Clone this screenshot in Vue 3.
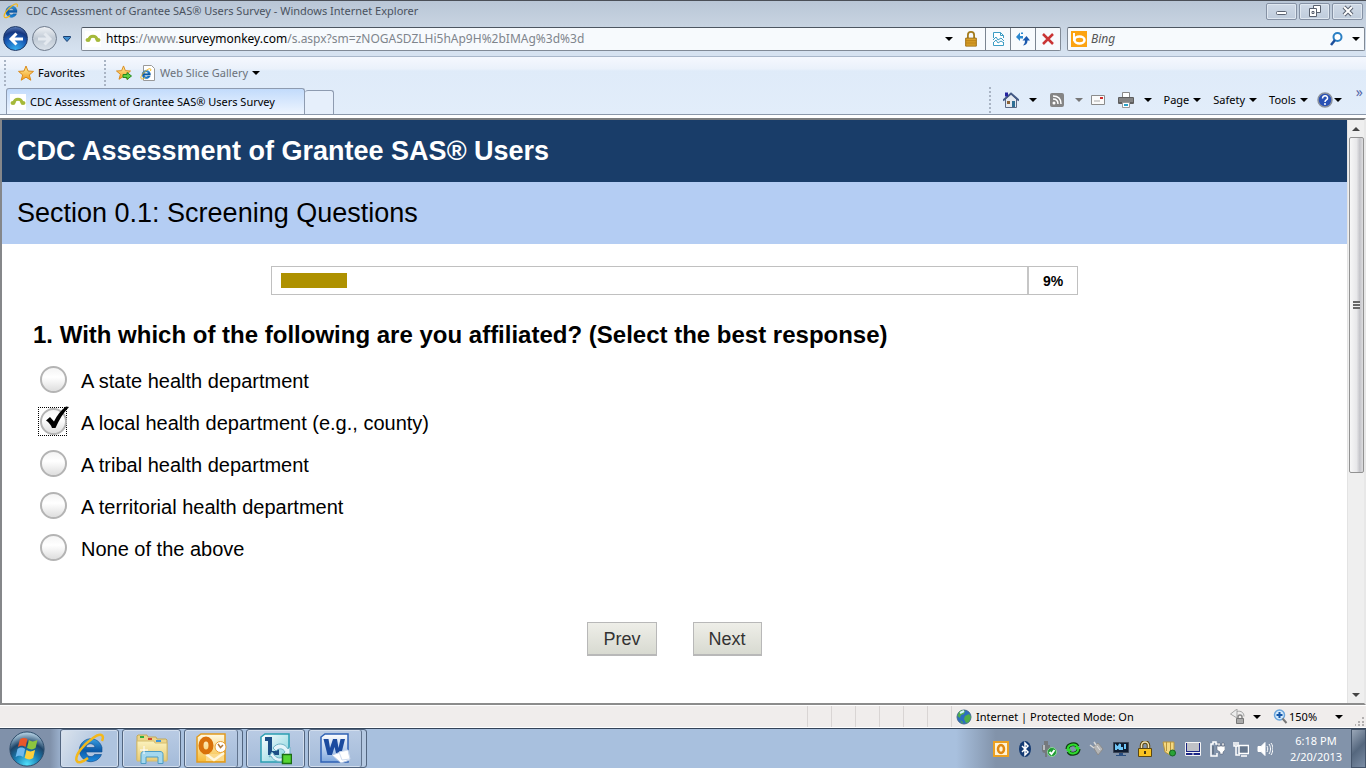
<template>
  <div class="desktop">
    <svg class="sprites" aria-hidden="true">
      <defs>
        <linearGradient id="blue" x1="0" y1="0" x2="0" y2="1">
          <stop offset="0" stop-color="#3a9fe0" />
          <stop offset="0.5" stop-color="#0c5aa8" />
          <stop offset="1" stop-color="#1c8ade" />
        </linearGradient>
        <linearGradient id="gold" x1="0" y1="0" x2="0" y2="1">
          <stop offset="0" stop-color="#fff0a0" />
          <stop offset="1" stop-color="#f29a1a" />
        </linearGradient>
        <linearGradient id="folder" x1="0" y1="0" x2="0" y2="1">
          <stop offset="0" stop-color="#fbf2bd" />
          <stop offset="1" stop-color="#e9cb74" />
        </linearGradient>
        <linearGradient id="orange" x1="0" y1="0" x2="0" y2="1">
          <stop offset="0" stop-color="#fffbe6" />
          <stop offset="1" stop-color="#f7bb36" />
        </linearGradient>
        <linearGradient id="teal" x1="0" y1="0" x2="1" y2="1">
          <stop offset="0" stop-color="#ffffff" />
          <stop offset="1" stop-color="#7cd0dc" />
        </linearGradient>
        <linearGradient id="paper" x1="0" y1="0" x2="0" y2="1">
          <stop offset="0" stop-color="#ffffff" />
          <stop offset="1" stop-color="#7fa8de" />
        </linearGradient>
        <radialGradient id="ball" cx="50%" cy="95%" r="90%">
          <stop offset="0" stop-color="#4fe0fb" />
          <stop offset="0.4" stop-color="#1a7fb4" />
          <stop offset="0.7" stop-color="#1d4468" />
          <stop offset="1" stop-color="#a9c6da" />
        </radialGradient>
      </defs>
      <symbol id="ie" viewBox="0 0 32 32">
        <path d="M27.500 21.500A11.500 11.500 0 1 1 28 14.500V19H12c.5 5 6.500 6 8.500 2.500zM12 14.500h9c-.5-5-8.500-5-9 0z" fill="url(#blue)" stroke="#0b4a8c" stroke-width=".6" />
        <path d="M28 8C31 1 26 0 19 5C9 12 1 22 2.500 27.500C4 31 9 29 14 25" fill="none" stroke="#f3b81c" stroke-width="2.500" />
      </symbol>
      <symbol id="monkey" viewBox="0 0 16 16">
        <rect width="16" height="16" fill="#fff" />
        <path d="M4 9C4 4 12 4 12 9" fill="none" stroke="#a5b93a" stroke-width="3" />
        <ellipse cx="3" cy="9" rx="2.500" ry="2" fill="#a5b93a" />
        <ellipse cx="13" cy="9" rx="2.500" ry="2" fill="#a5b93a" />
      </symbol>
      <symbol id="star" viewBox="0 0 16 16">
        <path d="M8 1l2 5 5.500.4-4.200 3.500 1.500 5.300L8 12.200l-4.800 3 1.500-5.300L.5 6.400 6 6z" fill="url(#gold)" stroke="#d98a1c" />
      </symbol>
      <symbol id="down" viewBox="0 0 8 8">
        <path d="M0 2h8L4 6z" fill="currentColor" />
      </symbol>
    </svg>

    <header class="chrome">
      <div class="titlebar">
        <svg class="icon"><use href="#ie" /></svg>
        <span class="title">CDC Assessment of Grantee SAS® Users Survey - Windows Internet Explorer</span>
        <div class="window-buttons">
          <button type="button" aria-label="Minimize">
            <svg viewBox="0 0 14 12"><rect x="1.500" y="6.500" width="10" height="3" rx="1" fill="#fff" stroke="#5a6270" /></svg>
          </button>
          <button type="button" aria-label="Restore">
            <svg viewBox="0 0 14 12" fill="#fff" stroke="#5a6270"><path d="M5.500.5h7v7h-7z" /><path d="M1.500 3.500h7v8h-7z" /><path d="M4 6.500h2v2H4z" /></svg>
          </button>
          <button type="button" aria-label="Close">
            <svg viewBox="0 0 14 12"><path d="M3 2l8 8M11 2l-8 8" stroke="#5a6270" stroke-width="4" /><path d="M3 2l8 8M11 2l-8 8" stroke="#fff" stroke-width="2" /></svg>
          </button>
        </div>
      </div>

      <div class="navrow">
        <div class="history">
          <button type="button" class="round back" aria-label="Back">
            <svg viewBox="0 0 16 16"><path d="M8.500 2.500L3 8l5.500 5.500M3.500 8H15" fill="none" stroke="#fff" stroke-width="3" /></svg>
          </button>
          <button type="button" class="round forward" aria-label="Forward">
            <svg viewBox="0 0 16 16"><path d="M7.500 2.500L13 8l-5.500 5.500M12.500 8H1" fill="none" stroke="#e4e9ef" stroke-width="3" /></svg>
          </button>
          <button type="button" class="bare recent" aria-label="Recent pages"><svg class="arrow" viewBox="0 0 8 8"><path d="M.5 1.500h7v1L4 6.500.5 2.500z" fill="#3f8fd0" stroke="#1b3f70" /></svg></button>
        </div>
        <div class="address">
          <svg class="icon"><use href="#monkey" /></svg>
          <a class="url" href="#"><b>https</b>://www.<b>surveymonkey.com</b>/s.aspx?sm=zNOGASDZLHi5hAp9H%2bIMAg%3d%3d</a>
          <button type="button" class="bare" aria-label="Show addresses"><svg class="arrow"><use href="#down" /></svg></button>
          <svg class="icon lock" viewBox="0 0 16 18"><path d="M4.500 8V4.500a3.500 3.500 0 0 1 7 0V8" fill="none" stroke="#a37b1d" stroke-width="2" /><path d="M2 8h12v9H2z" fill="#e2a92f" stroke="#96670b" /><path d="M2 10.500h12M2 12.500h12M2 14.500h12" stroke="#b57c12" /></svg>
          <button type="button" class="cell" aria-label="Compatibility view">
            <svg class="icon" viewBox="0 0 16 16"><path d="M3.500 7V1.500h7l3 3V7M3.500 11v3.500h10V11" fill="#fff" stroke="#3c9cc4" /><path d="M10.500 1.500v3h3M3 9l3-3 2 3 3-2 3 3M3 12l3-3 2 3 3-2 3 2" fill="none" stroke="#3c9cc4" /></svg>
          </button>
          <button type="button" class="cell" aria-label="Refresh">
            <svg class="icon" viewBox="0 0 16 16"><path d="M1 6l4-4.500V5h3v2.500H5V10zM6 1.500h2V3H6z" fill="#2a87cf" /><path d="M15 9.500h-2.500c0 3-1.500 4.500-4.500 5 1.500-1.500 2-3 2-5H7.500L11.500 5z" fill="#1a58ad" /></svg>
          </button>
          <button type="button" class="cell" aria-label="Stop">
            <svg class="icon" viewBox="0 0 16 16"><path d="M3 3l10 10M13 3L3 13" stroke="#c93434" stroke-width="2.500" /></svg>
          </button>
        </div>
        <div class="search">
          <svg class="icon" viewBox="0 0 16 16"><rect width="16" height="16" fill="#fca311" /><path d="M3 2v8" stroke="#fff" stroke-width="2" /><ellipse cx="8.500" cy="9" rx="5" ry="3.500" fill="none" stroke="#fff" stroke-width="2.500" /></svg>
          <input type="text" aria-label="Search" placeholder="Bing" />
          <button type="button" class="bare" aria-label="Search the web">
            <svg class="icon" viewBox="0 0 16 16"><circle cx="9.500" cy="6" r="4" fill="#fff" stroke="#2a7fc4" stroke-width="2" /><path d="M7 9l-4 5" stroke="#1c4f9c" stroke-width="2.500" /></svg>
          </button>
          <button type="button" class="bare" aria-label="Search options"><svg class="arrow"><use href="#down" /></svg></button>
        </div>
      </div>

      <div class="toolbars">
        <div class="favorites">
          <i class="grip"></i>
          <button type="button" class="bare"><svg class="icon"><use href="#star" /></svg>Favorites</button>
          <i class="grip"></i>
          <button type="button" class="bare" aria-label="Add to favorites bar">
            <svg class="icon" viewBox="0 0 16 16"><use href="#star" width="15" height="15" /><path d="M7 9.500h4V7.500l4.500 3.500-4.500 3.500v-2H7z" fill="#5fd044" stroke="#26891d" /></svg>
          </button>
          <button type="button" class="bare gallery">
            <svg class="icon" viewBox="0 0 16 16"><path d="M3.500.5h8l3 3v12h-11z" fill="#fff" stroke="#999" /><use href="#ie" y="3" width="12" height="12" /></svg>
            Web Slice Gallery
            <svg class="arrow"><use href="#down" /></svg>
          </button>
        </div>

        <div class="tabrow">
          <div class="tabs">
            <button type="button" class="tab"><svg class="icon"><use href="#monkey" /></svg>CDC Assessment of Grantee SAS® Users Survey</button>
            <button type="button" class="tab new" aria-label="New tab"></button>
          </div>
          <div class="commands">
            <i class="grip"></i>
            <button type="button" class="bare wide" aria-label="Home">
              <svg class="icon" viewBox="0 0 16 16"><path d="M2.500 7v8.500h11V7L8 2z" fill="#e4e9f0" stroke="#5b6a86" /><path d="M0 8.500l8-7 8 7" fill="none" stroke="#445a85" stroke-width="2" /><path d="M2 .5h3v4H2z" fill="#2424a0" /><path d="M9 9h3v6H9z" fill="#2f6f96" /><path d="M4 9h3v3H4z" fill="#8a6236" /></svg>
              <svg class="arrow"><use href="#down" /></svg>
            </button>
            <button type="button" class="bare wide feeds" aria-label="Feeds">
              <svg class="icon" viewBox="0 0 16 16"><rect x="1" y="1" width="14" height="14" rx="2" fill="#858585" /><path d="M4 7c3 0 5 2 5 5M4 4c5 0 8 3 8 8" fill="none" stroke="#fff" stroke-width="1.500" /><circle cx="5" cy="11" r="1.500" fill="#fff" /></svg>
              <svg class="arrow"><use href="#down" /></svg>
            </button>
            <button type="button" class="bare" aria-label="Read mail">
              <svg class="icon" viewBox="0 0 16 16"><path d="M1.500 3.500h13v9h-13z" fill="#fafafa" stroke="#8b8b8b" /><path d="M10 5h3v2h-3z" fill="#d22c2c" /><path d="M4 9h6" stroke="#aaa" /></svg>
            </button>
            <button type="button" class="bare wide" aria-label="Print">
              <svg class="icon" viewBox="0 0 16 16"><path d="M4.500.5h7V6h-7z" fill="#fff" stroke="#888" /><rect y="5" width="16" height="7" rx="1" fill="#5e5e5e" /><path d="M1 7h14M1 9h14" stroke="#a9a9a9" /><path d="M4.500 10.500h7v5h-7z" fill="#fff" stroke="#999" /><path d="M6 13h4" stroke="#28a0c8" stroke-width="2" /></svg>
              <svg class="arrow"><use href="#down" /></svg>
            </button>
            <button v-for="name in menus" :key="name" type="button" class="bare menu">
              {{ name }}<svg class="arrow"><use href="#down" /></svg>
            </button>
            <button type="button" class="bare help" aria-label="Help">
              <svg class="icon" viewBox="0 0 16 16"><circle cx="8" cy="8" r="7" fill="#2a52b5" stroke="#8c929d" stroke-width="1.500" /><path d="M5.500 6.500c0-4 5.500-3.500 5 0C10.200 8 8 8 8 10" fill="none" stroke="#fff" stroke-width="1.500" /><circle cx="8" cy="12" r="1" fill="#fff" /></svg>
              <svg class="arrow"><use href="#down" /></svg>
            </button>
            <button type="button" class="bare more" aria-label="More tools">»</button>
          </div>
        </div>
      </div>
    </header>

    <div class="viewport">
      <main class="page">
        <h1>CDC Assessment of Grantee SAS® Users</h1>
        <h2>Section 0.1: Screening Questions</h2>

        <div class="progress">
          <div class="track"><div class="bar" :style="{ width: progress + '%' }"></div></div>
          <div class="percent">{{ progress }}%</div>
        </div>

        <form @submit.prevent>
          <fieldset>
            <legend>1. With which of the following are you affiliated? (Select the best response)</legend>
            <label v-for="(option, i) in options" :key="option" :for="'opt' + i" class="option">
              <span class="mark" :class="{ focused: selected === i }">
                <input :id="'opt' + i" v-model="selected" type="radio" name="affiliation" :value="i" />
                <svg v-if="selected === i" class="tick" viewBox="0 0 24 24"><path d="M1 14.500l4-3.500 4 4.500C12 9 16 4 21 .5L24 1C18 7 14 14 10.500 22H7C6 19 4 16.500 1 14.500z" fill="#000" /></svg>
              </span>
              {{ option }}
            </label>
          </fieldset>
          <div class="actions">
            <button type="button">Prev</button>
            <button type="submit">Next</button>
          </div>
        </form>
      </main>
      <div class="scrollbar">
        <svg class="arrow up"><use href="#down" /></svg>
        <div class="rail"><div class="thumb"><i></i></div></div>
        <svg class="arrow"><use href="#down" /></svg>
      </div>
    </div>

    <footer class="status">
      <i v-for="n in 6" :key="n" class="pane"></i>
      <div class="zone">
        <svg class="icon" viewBox="0 0 16 16"><circle cx="8" cy="8" r="7" fill="#2b6fc0" stroke="#476b8d" /><path d="M3 3c2-2 5-2 6-1L8 5 5 6 4 9 1.500 7zM9 7l4-2 2 3-2 5-3 1-2-4zM4 11l3 2-1 1.500z" fill="#4fae48" /><path d="M4 4l4-2" stroke="#d5f2ff" stroke-width="2" /></svg>
        Internet | Protected Mode: On
      </div>
      <div class="privacy">
        <svg class="icon" viewBox="0 0 16 16"><path d="M7 2.500c4-1 7 1 7 5M7 0v9L.5 5z" fill="#ececec" stroke="#a5a5a5" /><path d="M8 10V8a2 2 0 0 1 4 0v2" fill="none" stroke="#888" stroke-width="1.500" /><path d="M6.500 9.500h7v5h-7z" fill="#aaa" stroke="#777" /></svg>
        <svg class="arrow"><use href="#down" /></svg>
      </div>
      <div class="zoom">
        <svg class="icon" viewBox="0 0 16 16"><circle cx="6.500" cy="6" r="5" fill="#d5ebfc" stroke="#6aa5dc" stroke-width="1.500" /><path d="M6.500 3v6M3.500 6h6" stroke="#1457a8" stroke-width="2" /><path d="M9.500 9.500l4 4.500" stroke="#777" stroke-width="2" /></svg>
        <span>150%</span>
        <svg class="arrow"><use href="#down" /></svg>
      </div>
      <svg class="resize" viewBox="0 0 9 9" fill="#b3b0b0"><path d="M7 0h2v2H7zM7 4h2v2H7zM3 4h2v2H3zM7 7h2v2H7zM3 7h2v2H3zM0 7h1v2H0z" /></svg>
    </footer>

    <nav class="taskbar">
      <button type="button" class="start" aria-label="Start">
        <svg viewBox="0 0 40 40">
          <circle cx="20" cy="20" r="18" fill="url(#ball)" stroke="#2a4a68" />
          <path d="M12.500 10c3-2 5-2 8-.5l-2 8.500c-3-2-5-2-8 0z" fill="#e9572b" />
          <path d="M22 10.500c3 2 5 2 9 0l-2 8.500c-3 2-5 2-9 0z" fill="#8cc63f" />
          <path d="M10 20c3-2 5-2 8 0l-2 8.500c-3-2-5-2-8 0z" fill="#6fb9ee" />
          <path d="M19.500 21c3 2 5 2 9 0l-2 8.500c-3 2-5 2-9 0z" fill="#fdd03c" />
        </svg>
      </button>
      <button type="button" class="task active" aria-label="Internet Explorer"><svg viewBox="0 0 32 32"><use href="#ie" /></svg></button>
      <button type="button" class="task" aria-label="Windows Explorer">
        <svg viewBox="0 0 32 32"><path d="M1 6V3l1-1h9l1 2h8l1 2h9l1 1v20H1z" fill="#ecd68b" stroke="#c2a85a" /><path d="M4 3h4v2H4z" fill="#2fae3e" /><path d="M12 5h4v2h-4z" fill="#d3452f" /><path d="M20 7h5v2h-5z" fill="#3d95d8" /><path d="M1 8h17l1 2h12v18H1z" fill="url(#folder)" stroke="#d6bd6d" /><path d="M5 30.500v-9c0-2 1-3 3-3h16c2 0 3 1 3 3v9h-5V24H10v6.500z" fill="#a4d8ee" stroke="#4d9cc4" /><path d="M8 13v8M4 17h8" stroke="#fff" /></svg>
      </button>
      <button type="button" class="task stacked" aria-label="Outlook">
        <svg viewBox="0 0 32 32"><path d="M2 4l4-3h24v28H2z" fill="url(#orange)" stroke="#e29a1e" stroke-width="1.500" /><path d="M11 21h18v7H11z" fill="#fbd98a" /><path d="M11 21l8 6 10-7" fill="none" stroke="#fff7df" stroke-width="2.500" /><ellipse cx="11" cy="12.500" rx="5" ry="6.500" fill="none" stroke="#d9710a" stroke-width="5" /><circle cx="25.500" cy="14" r="5.500" fill="#fff" stroke="#e8a033" /><path d="M23 11l2.500 3.500L28 12" fill="none" stroke="#b1783a" stroke-width="1.500" /></svg>
      </button>
      <button type="button" class="task" aria-label="Lync">
        <svg viewBox="0 0 32 32"><path d="M1 4l4-3h24v28H1z" fill="url(#teal)" stroke="#2b9fb3" stroke-width="1.500" /><path d="M5 6h5v14h7v-4" fill="none" stroke="#1c4f86" stroke-width="4" /><path d="M13 15c4-6 12-5 15 1l2-2v8h-8l3-3c-2-4-6-4-9-1zM12 19l1 1c3 6 8 6 12 3l1 3c-5 4-12 3-15-3l-2 1z" fill="#e4f4fa" stroke="#6fb3c6" /><path d="M22.500 21.500h9v9h-9z" fill="#55d632" stroke="#1b6c14" stroke-width="1.500" /></svg>
      </button>
      <button type="button" class="task stacked" aria-label="Word">
        <svg viewBox="0 0 32 32"><path d="M2 4l4-3h23v28H2z" fill="url(#paper)" stroke="#2f62b5" stroke-width="1.500" /><path d="M4.500 6h5l1.500 9 3-9h4l1.500 9 2-9H26l-4 16h-4.500L15.500 14 13 22H8.500z" fill="#1b4b9f" /><path d="M13 22l12-4 6 9-9 3z" fill="#fff" stroke="#b4c7e4" /><path d="M20 19l9-2 2 9-8 1z" fill="#fff" stroke="#cfdcf0" /></svg>
      </button>

      <div class="tray">
        <svg viewBox="0 0 16 16"><path d="M1 1h14v14H1z" fill="#fff3d5" stroke="#eca122" stroke-width="2" /><ellipse cx="8" cy="8" rx="3" ry="4" fill="none" stroke="#e18912" stroke-width="2.500" /></svg>
        <svg viewBox="0 0 16 16"><ellipse cx="8" cy="8" rx="6" ry="8" fill="#143a72" /><path d="M5 5l6 6-3 3V2l3 3-6 6" fill="none" stroke="#fff" stroke-width="1.500" /></svg>
        <svg viewBox="0 0 16 16"><path d="M3 0h4v4H3zM1 4h8v5c0 2-2 3-3 3v4H4v-4c-2 0-3-1-3-3z" fill="#75797d" /><path d="M2 4h2v5H2z" fill="#b9bdc1" /><circle cx="11" cy="11" r="4.500" fill="#1f9c34" stroke="#8fd69a" /><path d="M8.500 11l2 2 3-4" fill="none" stroke="#fff" stroke-width="2" /></svg>
        <svg viewBox="0 0 16 16"><path d="M2.500 8c0-5 8-6.500 10-2.500" fill="none" stroke="#0d3d10" stroke-width="4" /><path d="M13.500 8c0 5-8 6.500-10 2.500" fill="none" stroke="#0d3d10" stroke-width="4" /><path d="M2.500 9c0-6 8-7 10-3M13.500 7c0 6-8 7-10 3" fill="none" stroke="#2fdc2f" stroke-width="2" /><path d="M9 6h6l-3 3zM1 10h6L4 7z" fill="#2fdc2f" /></svg>
        <svg viewBox="0 0 16 16"><path d="M4 6l5-4 5 6-5 6z" fill="#b5b5b5" stroke="#8b8b8b" /><path d="M1 4l4 3M5 1l2 3" stroke="#d8d8d8" stroke-width="1.500" /><path d="M8 5l3 4" stroke="#e6e6e6" /></svg>
        <svg viewBox="0 0 16 16"><path d="M.5 1.500h15v10H.5z" fill="#101c30" stroke="#3c4656" /><path d="M3 9V5l2 2 2-4v6M9 9V6M12 8V3" fill="none" stroke="#6fc5f5" stroke-width="2" /><path d="M6 12h4v2H6zM3 14h10v1H3z" fill="#2a4f80" /></svg>
        <svg viewBox="0 0 16 16"><path d="M4.500 8V4.500a3.500 3.500 0 0 1 7 0V8" fill="none" stroke="#5b4712" stroke-width="3.500" /><path d="M4.500 8V4.500a3.500 3.500 0 0 1 7 0V8" fill="none" stroke="#f3e3b4" stroke-width="1.500" /><path d="M1.500 7.500h13v8h-13z" fill="#f8c321" stroke="#5b4712" /><path d="M7 10h2v3H7z" fill="#443512" /></svg>
        <svg viewBox="0 0 16 16"><path d="M2 1h11v10l-4 3-5-3z" fill="#f4d982" stroke="#b8943c" /><path d="M5.500 1v9M9.500 1v10" stroke="#b8943c" /><circle cx="11.500" cy="12" r="3" fill="#2aa336" stroke="#136420" /></svg>
        <svg viewBox="0 0 16 16"><path d="M.5 1.500h15v13H.5z" fill="#1b2585" stroke="#f4f4f4" /><path d="M2 2h12v8H2z" fill="#bfc1c6" /><path d="M0 11.500h16M8 11v4" stroke="#f4f4f4" /></svg>
        <svg viewBox="0 0 16 16"><path d="M9 3H7V1H4v2H2v12h6v-3" fill="none" stroke="#fff" stroke-width="1.500" /><path d="M4 5v8" stroke="#4c5a6d" /><path d="M8 5h8v4l-2 2v2h-3v-2L8 9zM9 2h2v3H9zM13 2h2v3h-2z" fill="#fff" stroke="#4c5a6d" stroke-width=".5" /></svg>
        <svg viewBox="0 0 16 16"><path d="M6 4.500h9.500v8H6z" fill="#66778d" stroke="#fff" stroke-width="1.500" /><path d="M1 1v4h4V1M3 1v3M3 5v9h4M8 15h6" fill="none" stroke="#fff" stroke-width="1.500" /></svg>
        <svg viewBox="0 0 16 16" fill="none" stroke="#fff"><path d="M1 5.500h3l4-4v13l-4-4H1z" fill="#fff" /><path d="M10 5c1 2 1 4 0 6M12 3c2 3 2 7 0 10M14 2c3 4 2 9 0 12" /></svg>
      </div>
      <div class="clock"><span>6:18 PM</span><span>2/20/2013</span></div>
      <button type="button" class="peek" aria-label="Show desktop"></button>
    </nav>
  </div>
</template>

<script setup>
import { ref } from 'vue';

const menus = ['Page', 'Safety', 'Tools'];

const options = [
  'A state health department',
  'A local health department (e.g., county)',
  'A tribal health department',
  'A territorial health department',
  'None of the above'
];

const selected = ref(1);
const progress = ref(9);
</script>

<style>
body {
  margin: 0;
}
</style>

<style scoped>
.desktop {
  display: flex;
  flex-direction: column;
  min-height: 100vh;
  font-family: "Noto Sans", "Open Sans", sans-serif;
  font-size: 11px;
  line-height: 16px;
  color: #000;
}

.desktop * {
  box-sizing: border-box;
}

.sprites {
  position: absolute;
  width: 0;
  height: 0;
}

svg {
  display: block;
  flex: none;
}

.icon {
  width: 16px;
  height: 16px;
}

.arrow {
  width: 8px;
  height: 8px;
}

button {
  font: inherit;
  color: inherit;
}

.bare {
  display: flex;
  align-items: center;
  gap: 4px;
  padding: 0;
  border: 0;
  background: none;
}

.grip {
  flex: none;
  width: 2px;
  height: 26px;
  background: repeating-linear-gradient(#a9b4c4 0 2px, transparent 2px 4px);
}

/* title and address */
.chrome {
  background: linear-gradient(#b9c6d6, #c6d2e0 22px, #d6e2f0 50px);
  border-top: 1px solid #4b4f57;
}

.titlebar {
  display: flex;
  align-items: center;
  height: 20px;
  padding: 0 3px;
  gap: 7px;
}

.title {
  flex: 1;
  color: #4a525e;
}

.window-buttons {
  display: flex;
  gap: 2px;
}

.window-buttons button {
  display: flex;
  align-items: center;
  justify-content: center;
  width: 31px;
  height: 17px;
  padding: 0;
  border: 1px solid #8591a4;
  border-radius: 2px;
  background: linear-gradient(#cfd9e6, #bfccdc);
  box-shadow: inset 0 0 0 1px #dfe7f0;
}

.window-buttons svg {
  width: 14px;
  height: 12px;
}

.navrow {
  display: flex;
  align-items: center;
  height: 35px;
  padding: 0 1px 0 3px;
  gap: 6px;
}

.history {
  display: flex;
  align-items: center;
  width: 72px;
  gap: 4px;
}

.round {
  display: flex;
  align-items: center;
  justify-content: center;
  width: 25px;
  height: 25px;
  padding: 0;
  border-radius: 50%;
}

.round svg {
  width: 16px;
  height: 16px;
}

.back {
  border: 1px solid #1b3766;
  background: radial-gradient(circle at 50% 100%, #36b2f2, #1757b3 50%, #16377f 70%, #7d9fd5);
}

.forward {
  border: 1px solid #6f7b8c;
  background: linear-gradient(#eef1f5, #c0cad5 50%, #dbe2ea);
}

.recent {
  margin-left: 2px;
}

.address,
.search {
  display: flex;
  align-items: center;
  height: 24px;
  border: 1px solid #818a96;
  border-top-color: #4d5661;
  border-radius: 2px;
  background: #f7fafd;
}

.address {
  flex: 1;
  padding-left: 3px;
}

.url {
  flex: 1;
  margin-left: 5px;
  font-size: 12px;
  color: #7f858c;
  text-decoration: none;
}

.url b {
  font-weight: 400;
  color: #000;
}

.lock {
  margin: 0 6px 0 10px;
}

.cell {
  display: flex;
  align-items: center;
  justify-content: center;
  width: 25px;
  height: 22px;
  padding: 0;
  border: 0;
  border-left: 1px solid #7b8591;
  background: none;
}

.search {
  width: 298px;
  padding: 0 4px 0 3px;
  gap: 4px;
}

.search input {
  flex: 1;
  min-width: 0;
  padding: 0;
  border: 0;
  outline: 0;
  background: none;
  font: italic 12px "Noto Sans", sans-serif;
}

.search input::placeholder {
  color: #555;
}

.search .bare + .bare {
  margin-left: 4px;
}

/* favorites, tabs, commands */
.toolbars {
  border-top: 1px solid #a9b7ca;
  background: linear-gradient(#f5f8fe, #eaf1fb 12px, #dfebf9 14px, #e2edfa);
}

.favorites {
  display: flex;
  align-items: center;
  height: 31px;
  padding-left: 4px;
}

.favorites .grip + .bare {
  margin-left: 12px;
}

.favorites .bare + .grip {
  margin-left: 19px;
}

.favorites .grip + .bare + .gallery {
  margin-left: 8px;
}

.gallery {
  color: #6c727a;
}

.gallery .arrow,
.menu .arrow {
  color: #000;
}

.favorites .grip ~ .grip + .bare {
  margin-left: 10px;
}

.tabrow {
  display: flex;
  align-items: flex-end;
  justify-content: space-between;
  height: 27px;
  border-bottom: 1px solid #8b98aa;
}

.tabs {
  display: flex;
  align-items: flex-end;
  padding-left: 6px;
}

.tab {
  display: flex;
  align-items: center;
  gap: 4px;
  width: 299px;
  height: 26px;
  padding: 0 3px;
  border: 1px solid #8e9bb0;
  border-bottom: 0;
  border-radius: 3px 3px 0 0;
  background: linear-gradient(#c2dbfb, #eef5ff);
  white-space: nowrap;
}

.tab.new {
  width: 29px;
  height: 24px;
  border-left: 0;
  background: #e6effb;
}

.commands {
  display: flex;
  align-items: center;
  height: 28px;
  gap: 12px;
}

.commands .wide {
  gap: 10px;
}

.commands .feeds {
  margin-right: -5px;
}

.commands .feeds .arrow {
  color: #777;
}

.commands .help {
  gap: 1px;
  margin: 0 2px 0 -3px;
}

.commands .more {
  align-self: flex-start;
  padding-right: 3px;
  font-size: 14px;
  line-height: 12px;
  color: #5767a8;
}

/* survey page */
.viewport {
  display: flex;
  flex: 1;
  border-top: 2px solid #7b7d80;
  border-left: 2px solid #85878a;
  border-right: 2px solid #e8e8e8;
  border-bottom: 2px solid #8c8c8c;
  margin-top: 3px;
  background: #fff;
}

.page {
  flex: 1;
  font-family: "Liberation Sans", Arial, sans-serif;
}

h1,
h2 {
  margin: 0;
  padding: 0 15px;
  font-size: 27px;
  line-height: 62px;
}

h1 {
  background: #193d69;
  color: #fff;
}

h2 {
  background: #b4cdf3;
  font-weight: 400;
}

.progress {
  display: flex;
  width: 60%;
  height: 29px;
  margin: 22px auto 0;
  border: 1px solid #c0c0c0;
}

.track {
  flex: 1;
  padding: 6px 9px;
  border-right: 2px solid #c6c6c6;
}

.bar {
  height: 15px;
  background: #ae9100;
}

.percent {
  width: 48px;
  font-size: 14px;
  font-weight: 700;
  line-height: 28px;
  text-align: center;
}

fieldset {
  margin: 0;
  padding: 24px 31px 0;
  border: 0;
}

legend {
  float: left;
  width: 100%;
  padding: 0;
  margin-bottom: 8px;
  font-size: 24px;
  font-weight: 700;
  line-height: 32px;
}

.option {
  display: flex;
  clear: both;
  align-items: center;
  gap: 14px;
  height: 42px;
  padding: 1px 0 0 5px;
  font-size: 20px;
}

.mark {
  position: relative;
  width: 29px;
  height: 29px;
  margin-bottom: 3px;
  padding: 0 1px;
  border: 1px solid transparent;
}

.mark.focused {
  border: 1px dotted #000;
}

.mark input {
  display: block;
  width: 27px;
  height: 27px;
  margin: 0;
  appearance: none;
  border: 2px solid #b4b4b4;
  border-radius: 50%;
  outline: 0;
  background: linear-gradient(#f4f4f4, #fff 40%, #dedede);
}

.tick {
  position: absolute;
  top: -2px;
  left: 6px;
  width: 24px;
  height: 24px;
}

.actions {
  display: flex;
  justify-content: center;
  gap: 36px;
  padding: 53px 0 40px;
}

.actions button {
  height: 34px;
  padding: 0 15px;
  border: 1px solid #b8b8b8;
  border-bottom-width: 2px;
  background: linear-gradient(#eeeee8, #d8dad1);
  font-size: 18px;
  color: #333;
}

.scrollbar {
  display: flex;
  flex-direction: column;
  align-items: center;
  width: 17px;
  padding: 5px 0 4px;
  border-left: 1px solid #e3e3e3;
  background: #efefef;
}

.scrollbar .arrow {
  color: #444;
}

.up {
  transform: rotate(180deg);
}

.rail {
  flex: 1;
  width: 15px;
  padding: 4px 0;
}

.thumb {
  display: flex;
  align-items: center;
  justify-content: center;
  height: 61%;
  border: 1px solid #929292;
  border-radius: 2px;
  background: linear-gradient(90deg, #f7f7f7, #e8e8ea 50%, #c5c5ca 75%, #dedee0);
}

.thumb i {
  width: 7px;
  height: 8px;
  background: repeating-linear-gradient(#666 0 2px, #eee 2px 3px);
}

/* status bar */
.status {
  display: flex;
  align-items: stretch;
  justify-content: flex-end;
  height: 23px;
  border-top: 1px solid #fff;
  border-bottom: 1px solid #fff;
  background: #f0edec;
  line-height: 21px;
}

.status div {
  display: flex;
  align-items: center;
}

.pane {
  width: 24px;
  border-left: 1px solid #d9d5d4;
}

.zone {
  width: 276px;
  padding-left: 4px;
  gap: 4px;
  border-left: 1px solid #d9d5d4;
}

.privacy {
  width: 46px;
  padding-left: 3px;
  gap: 7px;
}

.zoom {
  width: 70px;
}

.zoom span {
  flex: 1;
}

.resize {
  align-self: flex-end;
  width: 9px;
  height: 9px;
  margin: 0 2px 1px 12px;
}

/* taskbar */
.taskbar {
  display: flex;
  align-items: center;
  height: 40px;
  border-top: 1px solid #344459;
  background: linear-gradient(90deg, #8091aa 50px, #a8c0de 66px, #a8c0de calc(100% - 410px), #8293aa calc(100% - 370px));
}

.start {
  width: 60px;
  height: 39px;
  padding: 0 7px;
  border: 0;
  background: none;
}

.start svg {
  width: 40px;
  height: 38px;
}

.task {
  display: flex;
  align-items: center;
  justify-content: center;
  width: 59px;
  height: 39px;
  margin-right: 3px;
  padding: 0;
  border: 1px solid #52657f;
  border-radius: 3px;
  background: linear-gradient(#b9cbe4, #a4bbd9);
  box-shadow: inset 0 0 0 1px #d2deee;
}

.task svg {
  width: 32px;
  height: 32px;
}

.task.active {
  background: linear-gradient(120deg, #dce4ed, #afc4df 60%);
}

.task.stacked {
  padding-right: 5px;
  box-shadow: inset -4px 0 0 #b4c8e1, inset -5px 0 0 #60738d, inset 0 0 0 1px #d2deee;
}

.tray {
  display: flex;
  gap: 8px;
  margin-left: auto;
}

.tray svg {
  width: 16px;
  height: 16px;
}

.clock {
  display: flex;
  flex-direction: column;
  width: 78px;
  padding-left: 8px;
  color: #fff;
  text-align: center;
}

.peek {
  width: 15px;
  height: 39px;
  padding: 0;
  border: 1px solid #45556b;
  background: linear-gradient(135deg, #9aa7b8, #55677e 50%, #7b8da5);
}
</style>
